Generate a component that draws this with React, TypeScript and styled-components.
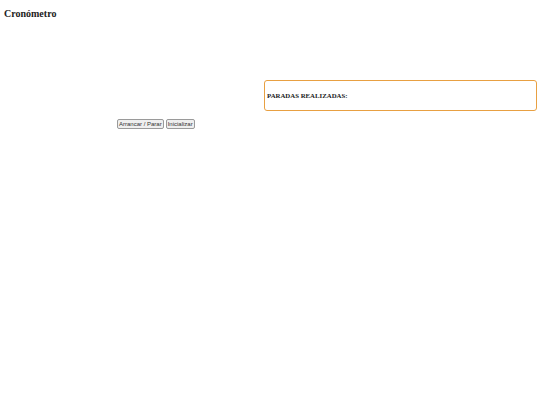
import React, { ReactElement } from 'react'
import styled, { createGlobalStyle } from 'styled-components'

const GlobalStyle = createGlobalStyle`
  html, body {
    margin: 0;
    padding: 0;
    background: #ffffff;
  }
  body {
    font-family: "Liberation Serif", "Times New Roman", serif;
    color: #222222;
  }
`

export default function App(): ReactElement {
  return (
    <>
      <GlobalStyle />
      <Page>
        <Title>Cronómetro</Title>

        <Main>
          <StopwatchColumn>
            <Display />
            <Controls>
              <ControlButton>Arrancar / Parar</ControlButton>
              <ControlButton>Inicializar</ControlButton>
            </Controls>
          </StopwatchColumn>

          <LapsColumn>
            <LapsBox>
              <LapsTitle>PARADAS REALIZADAS:</LapsTitle>
            </LapsBox>
          </LapsColumn>
        </Main>
      </Page>
    </>
  )
}

const Page = styled.div`
  padding: 7px 0 0 0;
`

const Title = styled.h1`
  margin: 0 0 0 4px;
  font-family: "Liberation Serif", "Times New Roman", serif;
  font-size: 10px;
  line-height: 13px;
  font-weight: bold;
  color: #222222;
`

const Main = styled.div`
  display: flex;
  flex-direction: row;
  align-items: flex-start;
  margin-top: 2px;
`

const StopwatchColumn = styled.div`
  display: flex;
  flex-direction: column;
  width: 264px;
`

const Display = styled.div`
  height: 97px;
`

const Controls = styled.div`
  display: flex;
  flex-direction: row;
  gap: 2px;
  padding-left: 117px;
`

const ControlButton = styled.button`
  height: 10px;
  margin: 0;
  padding: 0 1px;
  border: 1px solid #9a9a9a;
  border-radius: 2px;
  background: #efefef;
  font-family: "Liberation Sans", Arial, sans-serif;
  font-size: 6px;
  line-height: 8px;
  color: #333333;
  white-space: nowrap;
`

const LapsColumn = styled.div`
  display: flex;
  flex-direction: column;
  width: 273px;
  padding-top: 58px;
`

const LapsBox = styled.div`
  display: flex;
  align-items: center;
  height: 29px;
  padding: 0 2px;
  border: 1px solid #e8a042;
  border-radius: 3px;
`

const LapsTitle = styled.h3`
  margin: 0 0 1px 0;
  font-family: "Liberation Serif", "Times New Roman", serif;
  font-size: 6.8px;
  line-height: 9px;
  font-weight: bold;
  color: #222222;
`
